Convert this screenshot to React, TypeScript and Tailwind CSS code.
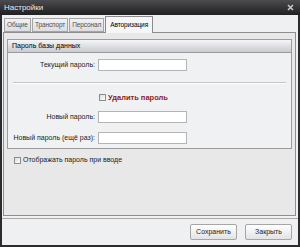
import React from 'react';

function Checkbox() {
  return (
    <span className="inline-block w-[7px] h-[7px] border border-[#8c8c8c] bg-gradient-to-br from-[#dcdcdc] to-white shrink-0" />
  );
}

function Field({ label }: { label: string }) {
  return (
    <div className="flex items-center">
      <span className="w-[87px] text-right text-[7px] text-[#222] whitespace-nowrap">{label}</span>
      <span className="ml-[3px] w-[89px] h-[12px] bg-white border border-[#b4b4b4]" />
    </div>
  );
}

function Tab({ label, active }: { label: string; active?: boolean }) {
  if (active) {
    return (
      <div className="h-[17px] px-[4px] flex items-center border border-b-0 border-[#8a8a8a] bg-[#f5f6f8] text-[6.5px] text-black -mb-px relative z-10 tracking-[-0.1px]">
        {label}
      </div>
    );
  }
  return (
    <div className="h-[14px] px-[2px] flex items-center border border-[#a4a4a4] bg-gradient-to-b from-[#f2f2f4] to-[#dcdde0] text-[6.5px] text-[#505050] mr-[1px] tracking-[-0.1px]">
      {label}
    </div>
  );
}

export default function App() {
  return (
    <div className="w-[300px] h-[247px] flex flex-col bg-[#2c2c2e] font-['Liberation_Sans',Arial,sans-serif] overflow-hidden">
      <div className="h-[15px] flex items-center justify-between pl-[4px] pr-[6px] bg-gradient-to-b from-[#4c4c50] to-[#202022]">
        <span className="text-[8px] text-[#ececec]">Настройки</span>
        <svg width="7" height="7" viewBox="0 0 7 7">
          <path d="M1 1L6 6M6 1L1 6" stroke="#c8c8c8" strokeWidth="1.6" />
        </svg>
      </div>

      <div className="flex-1 mx-[2px] mb-[2px] flex flex-col bg-[#eef0f2]">
        <div className="h-[17px] flex items-end pl-[2px]">
          <Tab label="Общие" />
          <Tab label="Транспорт" />
          <Tab label="Персонал" />
          <Tab label="Авторизация" active />
        </div>

        <div className="flex-1 ml-[1px] mr-[2px] border border-[#8e8e8e] bg-[#e8e8e9] flex flex-col">
          <div className="mx-[3px] mt-[6px] border border-[#9c9c9c] bg-[#f0f1f3]">
            <div className="h-[13px] flex items-center pl-[4px] border-b border-[#9c9c9c] bg-gradient-to-b from-[#f6f6f8] to-[#c9cbd0] text-[7px] text-black">
              Пароль базы данных
            </div>
            <div className="pt-[6px] pb-[4px]">
              <Field label="Текущий пароль:" />
              <div className="mt-[11px] mx-[5px] border-t border-[#c4c4c4] border-b border-b-white" />
              <div className="mt-[8px] flex items-center pl-[91px] gap-[2px]">
                <Checkbox />
                <span className="text-[7.5px] font-bold text-[#8e1c1c]">Удалить пароль</span>
              </div>
              <div className="mt-[8px]">
                <Field label="Новый пароль:" />
              </div>
              <div className="mt-[9px]">
                <Field label="Новый пароль (ещё раз):" />
              </div>
            </div>
          </div>
          <div className="mt-[6px] ml-[10px] flex items-center gap-[2px]">
            <Checkbox />
            <span className="text-[7px] text-[#222]">Отображать пароль при вводе</span>
          </div>
        </div>

        <div className="h-[27px] mt-[2px] border-t border-[#a8a8a8] flex items-center justify-end gap-[8px] pr-[6px]">
          <button className="w-[47px] h-[16px] border border-[#a6a6a6] rounded-[2px] bg-gradient-to-b from-white to-[#e2e3e6] text-[7px] text-[#222]">
            Сохранить
          </button>
          <button className="w-[47px] h-[16px] border border-[#a6a6a6] rounded-[2px] bg-gradient-to-b from-white to-[#e2e3e6] text-[7px] text-[#222]">
            Закрыть
          </button>
        </div>
      </div>
    </div>
  );
}
